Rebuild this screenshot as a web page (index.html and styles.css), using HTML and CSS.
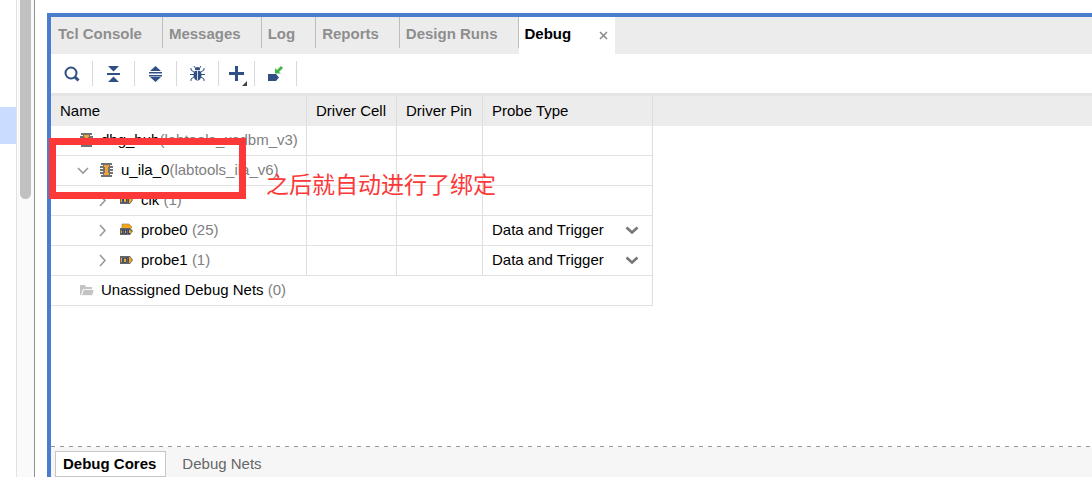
FILE: index.html
```html
<!DOCTYPE html>
<html lang="en">
<head>
<meta charset="utf-8">
<title>Debug</title>
<link rel="stylesheet" href="styles.css">
</head>
<body>
<svg class="defs" aria-hidden="true">
  <symbol id="core" viewBox="0 0 14 14">
    <path fill="#6f7376" d="M1 0h11v2H1zM3 2h7v10H3zM0 3h13v2H0zM0 6h13v2H0zM0 9h13v2H0zM1 12h11v2H1z"/>
    <path fill="#f5a133" d="M4 2h5v2H8v6h1v2H4v-2h1V4H4z"/>
  </symbol>
  <symbol id="probe" viewBox="0 0 14 14">
    <path fill="#666" d="M0 3h10l3 4-3 4H0z"/>
    <path fill="#f9a61a" d="M1 5h1v4H1zM4 6h2v3H4zM7 4h3l2 3-2 3H9V5H7z"/>
    <path fill="none" stroke="#3a5078" d="M2.500 9.500v-4h1v4h3v-5h2v5"/>
  </symbol>
  <symbol id="bus" viewBox="0 0 14 14">
    <path fill="#f9a61a" stroke="#8b7a55" stroke-width=".6" d="M2 1h7l3 3-2 3H2z"/>
    <path fill="#666" d="M0 5h10l3 3-3 4H0z"/>
    <path fill="#f9a61a" d="M1 8h1v3H1zM5 8h1v3H5zM9 7h1l2 2-2 2H9z"/>
    <path fill="none" stroke="#2f4a7c" d="M1 10.500h1.500v-4h2v4h2v-4h2v4h2"/>
  </symbol>
  <symbol id="right" viewBox="0 0 14 14"><path fill="none" stroke="#999" stroke-width="1.600" d="M4 2l5 5.500-5 5.500"/></symbol>
  <symbol id="down" viewBox="0 0 14 14"><path fill="none" stroke="#999" stroke-width="1.600" d="M2 5l5 5 5-5"/></symbol>
  <symbol id="pick" viewBox="0 0 14 14"><path fill="none" stroke="#777" stroke-width="2.600" d="M1.500 4.500l5.500 5 5.500-5"/></symbol>
</svg>
<div class="app">
  <aside class="side"><div class="selected"></div></aside>
  <div class="scrollbar"><div class="thumb"></div></div>
  <main class="panel">
    <nav class="tabs" role="tablist">
      <button class="tab" role="tab">Tcl Console</button>
      <button class="tab" role="tab">Messages</button>
      <button class="tab" role="tab">Log</button>
      <button class="tab" role="tab">Reports</button>
      <button class="tab" role="tab">Design Runs</button>
      <div class="current">
        <button class="tab-active" role="tab" aria-selected="true">Debug</button>
        <button class="close" aria-label="Close"><svg width="10" height="10"><path fill="none" stroke="#888" stroke-width="1.500" d="M1 1l7 7M8 1l-7 7"/></svg></button>
      </div>
    </nav>
    <div class="toolbar">
      <button class="tool" aria-label="Search"><svg width="18" height="18"><circle cx="8" cy="8" r="5.500" fill="none" stroke="#304f85" stroke-width="2"/><path stroke="#304f85" stroke-width="3" d="M12 12l3.500 3.500"/></svg></button>
      <button class="tool" aria-label="Collapse all"><svg width="18" height="18"><path fill="#304f85" d="M3 1h11L8.500 6.500zM2 8h13v2H2zM3 17h11l-5.500-5.500z"/></svg></button>
      <button class="tool" aria-label="Expand all"><svg width="18" height="18"><path fill="#304f85" d="M3 6h11L8.500 1zM2 7h13v1.500H2zM2 10h13v1.500H2zM3 12h11l-5.500 5z"/></svg></button>
      <button class="tool" aria-label="Debug"><svg width="18" height="18"><path fill="none" stroke="#304f85" d="M5 1l2 3M12 1l-2 3M2 3v2l3 2M15 3v2l-3 2M1 9.500h4M12 9.500h4M2 16v-2l3-2M15 16v-2l-3-2"/><ellipse cx="8.500" cy="10" rx="4" ry="5.500" fill="#304f85"/><path fill="#304f85" d="M6 5q0-3 2.500-3T11 5z"/><path stroke="#fff" stroke-width=".8" d="M5 5.500h7M8.500 6v9"/></svg></button>
      <button class="tool add" aria-label="Add"><svg width="20" height="24"><path fill="#304f85" d="M8 4h3v6h6v3h-6v6H8v-6H2v-3h6z"/><path fill="#444" d="M20 19v5h-5z"/></svg></button>
      <button class="tool" aria-label="Connect probe"><svg width="18" height="18"><path fill="#304f85" d="M1 9h8l3 3.500L9 16H1z"/><path fill="#3fb54a" d="M8 3l2 2 4-4 2 2-4 4 2 1.500H8z"/></svg></button>
    </div>
    <section class="content">
      <table class="cores">
        <colgroup><col class="c-name"><col class="c-cell"><col class="c-pin"><col class="c-type"><col></colgroup>
        <thead><tr><th>Name</th><th>Driver Cell</th><th>Driver Pin</th><th>Probe Type</th><th class="rest"></th></tr></thead>
        <tbody>
          <tr><td><div class="node level1"><svg><use href="#core"/></svg><span>dbg_hub<i>(labtools_xsdbm_v3)</i></span></div></td><td></td><td></td><td></td><td class="rest"></td></tr>
          <tr><td><div class="node open"><svg class="arrow"><use href="#down"/></svg><svg><use href="#core"/></svg><span>u_ila_0<i>(labtools_ila_v6)</i></span></div></td><td></td><td></td><td></td><td class="rest"></td></tr>
          <tr><td><div class="node level2"><svg class="arrow"><use href="#right"/></svg><svg><use href="#probe"/></svg><span>clk <i>(1)</i></span></div></td><td></td><td></td><td></td><td class="rest"></td></tr>
          <tr><td><div class="node level2"><svg class="arrow"><use href="#right"/></svg><svg><use href="#bus"/></svg><span>probe0 <i>(25)</i></span></div></td><td></td><td></td><td><div class="pick"><select aria-label="probe0 type"><option>Data and Trigger</option></select><svg><use href="#pick"/></svg></div></td><td class="rest"></td></tr>
          <tr><td><div class="node level2"><svg class="arrow"><use href="#right"/></svg><svg><use href="#probe"/></svg><span>probe1 <i>(1)</i></span></div></td><td></td><td></td><td><div class="pick"><select aria-label="probe1 type"><option>Data and Trigger</option></select><svg><use href="#pick"/></svg></div></td><td class="rest"></td></tr>
          <tr><td colspan="4"><div class="node level1"><svg viewBox="0 0 14 14"><path fill="#c4c4c4" d="M0 2h5l1 2h6v2H3l-2 6H0z"/><path fill="#c4c4c4" stroke="#fff" stroke-width=".7" d="M3.500 6.500H14L12.500 12.500H1.500z"/></svg><span>Unassigned Debug Nets <i>(0)</i></span></div></td><td class="rest"></td></tr>
        </tbody>
      </table>
      <div class="mark"></div>
      <div class="note" lang="zh">之后就自动进行了绑定</div>
    </section>
    <svg class="divider" aria-hidden="true"><path stroke="#999" stroke-dasharray="4 5" d="M0 .5h4000"/></svg>
    <footer class="views">
      <button class="view on">Debug Cores</button>
      <button class="view">Debug Nets</button>
    </footer>
  </main>
</div>
</body>
</html>
```
FILE: styles.css
```css
* { box-sizing: border-box; }
body { margin: 0; background: #fff; color: #000; font: 15px/18px "Liberation Sans", Arial, sans-serif; }
button, select { font: inherit; color: inherit; background: none; border: 0; border-radius: 0; margin: 0; padding: 0; }
.defs { display: none; }
.app { display: flex; height: 100vh; overflow: hidden; }
.side { width: 16px; padding-top: 107px; }
.selected { height: 37px; background: #cadcff; }
.scrollbar { width: 19px; background: #fafafa; border-left: 1px solid #e2e2e2; border-right: 1px solid #909090; padding: 0 3px; }
.thumb { width: 11px; height: 199px; background: #c1c1c1; border-radius: 0 0 6px 6px; }
.panel { flex: 1; min-width: 0; display: flex; flex-direction: column; margin: 13px 0 0 12px; border: solid #4a7dce; border-width: 4px 0 0 4px; }

.tabs { display: flex; align-items: flex-start; height: 37px; background: #ececec; }
.tab { height: 31px; padding: 3px 20px 0 6px; border-right: 1px solid #bdbdbd; color: #8e8e8e; font-weight: bold; }
.tab:first-child { padding-left: 7px; }
.current { display: flex; align-items: flex-start; justify-content: space-between; width: 96px; height: 37px; padding: 0 6px; background: #fff; }
.tab-active { height: 31px; padding-top: 3px; font-weight: bold; }
.close { height: 31px; padding-top: 7px; }
.close svg { display: block; }

.toolbar { display: flex; align-items: center; height: 39px; }
.tool { display: flex; align-items: center; justify-content: center; width: 42px; height: 25px; border-right: 1px solid #d9d9d9; }
.add { width: 36px; }

.content { position: relative; flex: 1; min-height: 0; border-top: 3px solid #e5e5e5; }
.cores { width: 100%; table-layout: fixed; border-collapse: separate; border-spacing: 0; }
.c-name { width: 256px; }
.c-cell { width: 90px; }
.c-pin { width: 86px; }
.c-type { width: 170px; }
.cores th, .cores td { height: 30px; padding: 0 9px; text-align: left; font-weight: normal; white-space: nowrap; border-right: 1px solid #dedede; }
.cores th { background: #ececec; }
.cores td { padding-bottom: 2px; border-bottom: 1px solid #e2e2e2; }
.cores .rest { border-right: 0; border-bottom: 0; }
.node { display: flex; align-items: center; gap: 7px; }
.node svg, .pick svg { flex: none; width: 14px; height: 14px; }
.node .arrow { margin-right: 3px; }
.node i { color: #808080; font-style: normal; }
.level1 { padding-left: 20px; }
.open { padding-left: 16px; }
.level2 { padding-left: 36px; }
.pick { position: relative; display: flex; align-items: center; }
.pick select { width: 100%; height: 20px; appearance: none; }
.pick svg { position: absolute; right: 4px; pointer-events: none; }
.mark { position: absolute; left: -2px; top: 42px; width: 197px; height: 61px; border: 7px solid #fd3838; }
.note { position: absolute; left: 215px; top: 70px; color: #fd3838; font: 23px/34px "Noto Sans CJK SC", sans-serif; white-space: nowrap; }

.divider { flex: none; display: block; width: 100%; height: 1px; }
.views { display: flex; gap: 8px; height: 30px; padding: 4px 4px 0; background: #f6f6f6; }
.view { height: 26px; padding: 0 7px; border: 1px solid transparent; color: #666; }
.on { background: #fff; border-color: #c6c6c6; color: #000; font-weight: bold; padding-right: 9px; }
```
